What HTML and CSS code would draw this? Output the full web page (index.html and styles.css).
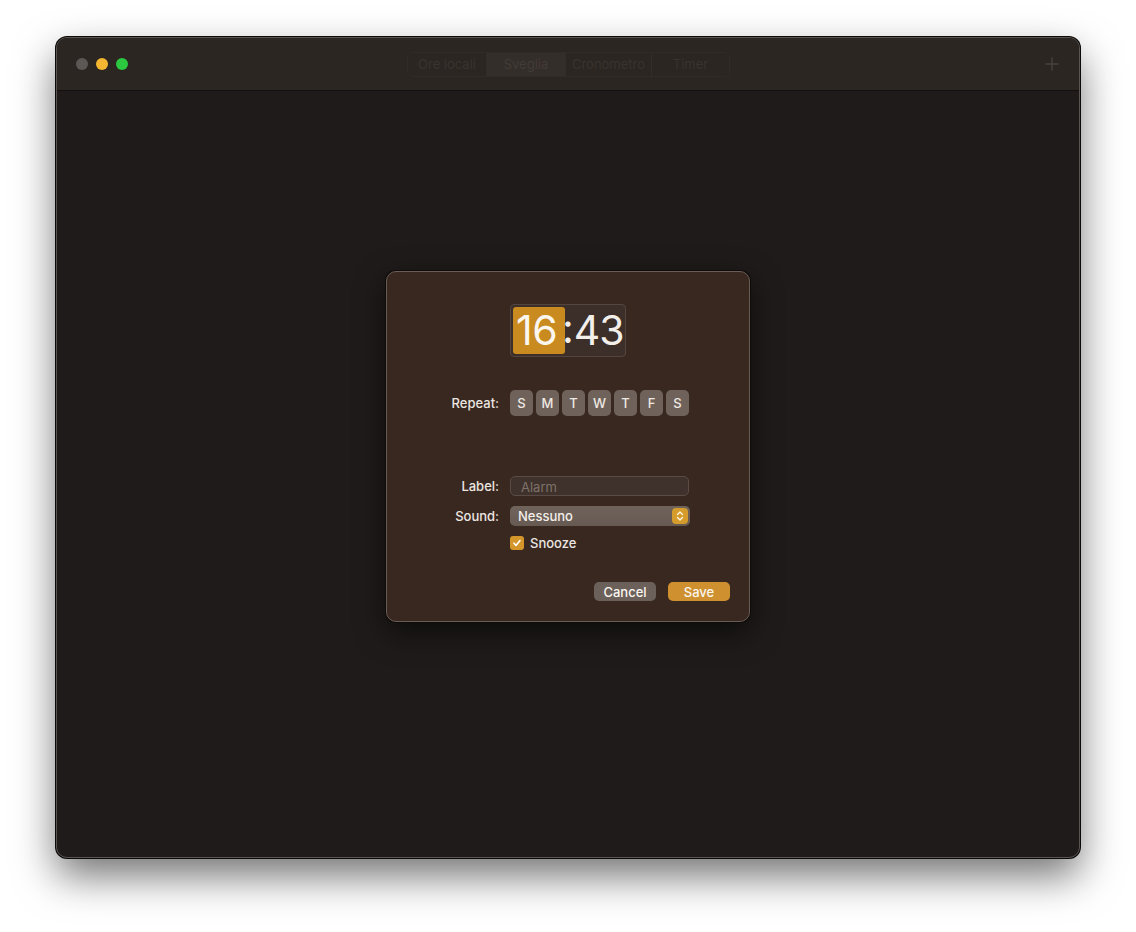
FILE: index.html
```html
<!doctype html>
<html lang="en">
<head>
<title>Sveglia</title>
<link rel="stylesheet" href="styles.css">
</head>
<body>

<div class="page">
  <div class="window">
    <div class="titlebar">
      <div class="lights">
        <span class="light gray"></span>
        <span class="light yellow"></span>
        <span class="light green"></span>
      </div>
      <div class="segments">
        <span class="seg">Ore locali</span>
        <span class="seg selected">Sveglia</span>
        <span class="seg">Cronometro</span>
        <span class="seg">Timer</span>
      </div>
      <div class="plus">
        <svg width="14" height="14" viewBox="0 0 14 14"><path d="M7 1v12M1 7h12" stroke="#48413c" stroke-width="1.4" stroke-linecap="round"/></svg>
      </div>
    </div>

    <div class="content">
      <div class="dialog">
        <div class="time-row">
          <div class="time-box">
            <span class="hours">16</span><span class="colon">:</span><span class="mins">43</span>
          </div>
        </div>

        <div class="row repeat-row">
          <span class="label">Repeat:</span>
          <div class="days">
            <span class="day">S</span>
            <span class="day">M</span>
            <span class="day">T</span>
            <span class="day">W</span>
            <span class="day">T</span>
            <span class="day">F</span>
            <span class="day">S</span>
          </div>
        </div>

        <div class="row label-row">
          <span class="label">Label:</span>
          <div class="field">Alarm</div>
        </div>

        <div class="row sound-row">
          <span class="label">Sound:</span>
          <div class="popup">
            <span>Nessuno</span>
            <span class="stepper">
              <svg width="10" height="12" viewBox="0 0 10 12"><path d="M2.5 4.5L5 2l2.5 2.5M2.5 7.5L5 10l2.5-2.5" fill="none" stroke="#fff3dc" stroke-width="1.4" stroke-linecap="round" stroke-linejoin="round"/></svg>
            </span>
          </div>
        </div>

        <div class="row snooze-row">
          <span class="label"></span>
          <div class="check">
            <span class="box">
              <svg width="10" height="10" viewBox="0 0 10 10"><path d="M2 5.2l2 2.2L8 2.6" fill="none" stroke="#fff" stroke-width="1.6" stroke-linecap="round" stroke-linejoin="round"/></svg>
            </span>
            Snooze
          </div>
        </div>

        <div class="actions">
          <button class="btn cancel">Cancel</button>
          <button class="btn save">Save</button>
        </div>
      </div>
    </div>
  </div>
</div>

</body>
</html>
```

FILE: styles.css
```css
* {
  box-sizing: border-box;
}

body {
  margin: 0;
  background: #ffffff;
  font-family: Inter, "Helvetica Neue", "Liberation Sans", sans-serif;
  font-size: 13px;
  color: #ece6e0;
}

.page {
  padding: 37px 56px;
  height: 932px;
}

.window {
  width: 1024px;
  height: 821px;
  border-radius: 11px;
  background: #1f1b1a;
  border: 1px solid #5a5551;
  box-shadow: 0 0 0 1px #0c0a09, 0 18px 40px rgba(0, 0, 0, 0.55);
  overflow: hidden;
  display: flex;
  flex-direction: column;
}

.titlebar {
  height: 53px;
  flex: none;
  background: #2b2622;
  border-bottom: 1px solid #121010;
  display: flex;
  align-items: center;
  padding: 0 20px 0 19px;
}

.lights {
  display: flex;
  gap: 8px;
  width: 310px;
}

.light {
  width: 12px;
  height: 12px;
  border-radius: 50%;
}

.gray { background: #5b5856; }
.yellow { background: #f5b731; }
.green { background: #2bc840; }

.segments {
  display: flex;
  height: 25px;
  border: 1px solid #312b27;
  border-radius: 6px;
  margin-left: 21px;
  overflow: hidden;
}

.seg {
  display: flex;
  align-items: center;
  justify-content: center;
  width: 79px;
  color: #39332f;
  font-size: 13px;
  border-right: 1px solid #332d29;
}

.seg:nth-child(3) { width: 86px; }
.seg:last-child { width: 77px; border-right: none; }

.seg.selected {
  background: #342e2a;
  color: #423b36;
}

.plus {
  margin-left: auto;
  display: flex;
}

.content {
  flex: 1;
  display: flex;
  justify-content: center;
  padding-top: 180px;
}

.dialog {
  width: 364px;
  height: 351px;
  background: #382820;
  border: 1px solid #6b5d55;
  border-radius: 10px;
  box-shadow: 0 0 0 1px #0e0b0a, 0 10px 30px rgba(0, 0, 0, 0.6);
  padding: 0 19px 0 0;
  display: flex;
  flex-direction: column;
}

.time-row {
  padding: 32px 0 0 123px;
  height: 118px;
}

.time-box {
  display: inline-flex;
  align-items: center;
  width: 116px;
  height: 53px;
  padding: 2px;
  border: 1px solid #54463e;
  border-radius: 4px;
  background: #3c2e28;
  font-size: 41px;
  color: #f2eeea;
  line-height: 1;
  overflow: hidden;
}

.hours {
  flex: none;
  display: flex;
  align-items: center;
  height: 47px;
  width: 52px;
  padding-left: 3px;
  background: #c98a1f;
  border-radius: 3px;
  color: #fbf6ee;
  letter-spacing: -0.5px;
}

.colon {
  margin-left: -3px;
  padding-bottom: 4px;
}

.mins {
  letter-spacing: -1px;
}

.row {
  display: flex;
  align-items: center;
  gap: 11px;
}

.label {
  width: 112px;
  text-align: right;
  font-weight: 500;
  color: #ece6e0;
}

.repeat-row {
  height: 26px;
}

.days {
  display: flex;
  gap: 3px;
}

.day {
  width: 23px;
  height: 26px;
  border-radius: 5px;
  background: #6e625b;
  display: flex;
  align-items: center;
  justify-content: center;
  font-weight: 500;
  color: #eee8e2;
}

.label-row {
  margin-top: 60px;
  height: 20px;
}

.field {
  width: 179px;
  height: 20px;
  border: 1px solid #5a4c44;
  border-radius: 5px;
  background: #3f312b;
  color: #7d716a;
  padding: 2px 10px;
}

.sound-row {
  margin-top: 10px;
  height: 20px;
}

.popup {
  width: 180px;
  height: 20px;
  border-radius: 5px;
  background: linear-gradient(#6f635b, #675a52);
  display: flex;
  align-items: center;
  padding: 0 2px 0 8px;
  font-weight: 500;
  color: #f3eeea;
}

.stepper {
  margin-left: auto;
  width: 16px;
  height: 16px;
  border-radius: 4px;
  background: #d59c2c;
  display: flex;
  align-items: center;
  justify-content: center;
}

.snooze-row {
  margin-top: 10px;
  height: 14px;
}

.check {
  display: flex;
  align-items: center;
  gap: 6px;
  font-weight: 500;
}

.box {
  width: 14px;
  height: 14px;
  border-radius: 3px;
  background: #d4962b;
  display: flex;
  align-items: center;
  justify-content: center;
}

.actions {
  display: flex;
  justify-content: flex-end;
  gap: 12px;
  margin-top: 32px;
}

.btn {
  font: inherit;
  font-weight: 500;
  width: 62px;
  height: 19px;
  border: none;
  border-radius: 5px;
  color: #fbf6f0;
  padding: 0;
}

.cancel {
  background: #6b605a;
}

.save {
  background: #cf912f;
}
```
